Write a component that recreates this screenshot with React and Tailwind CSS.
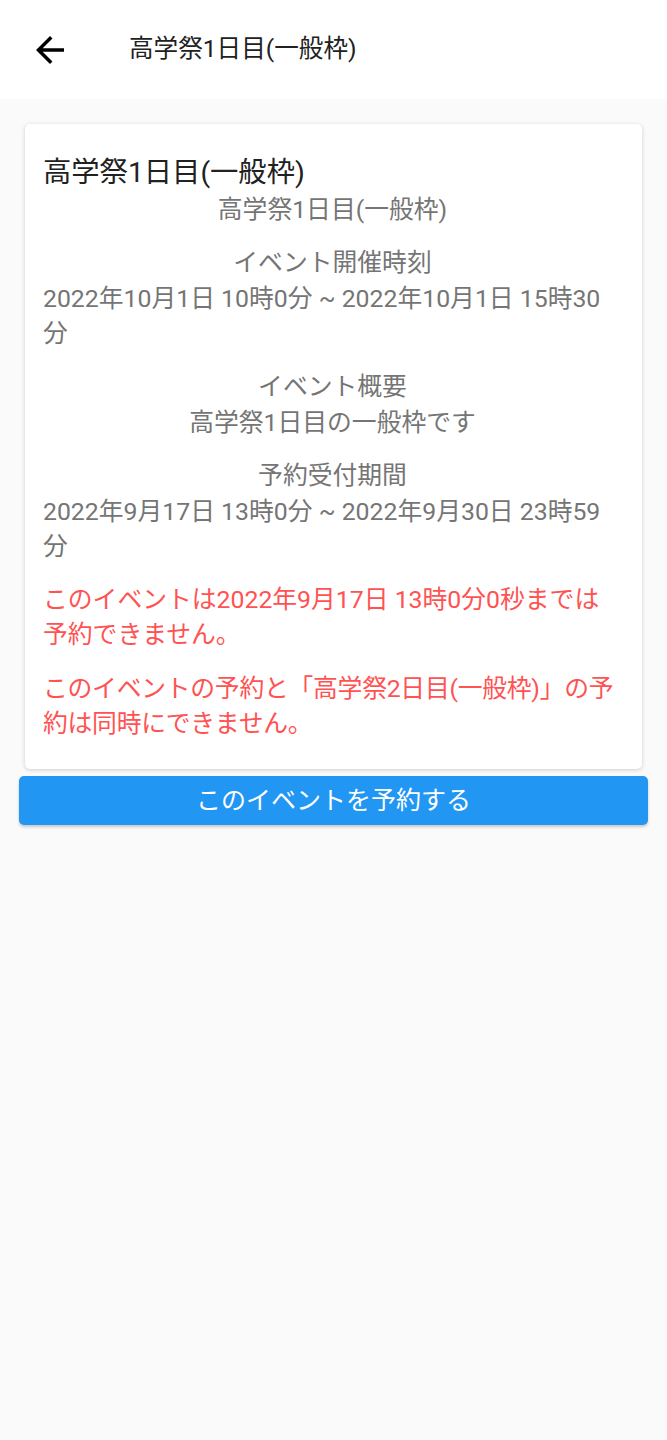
import React from "react";

const font = { fontFamily: "Roboto, 'Noto Sans CJK JP', sans-serif" };

const BackIcon = () => (
  <svg viewBox="0 0 24 24" className="w-[42px] h-[42px]" fill="#000">
    <path d="M20 11H7.83l5.59-5.59L12 4l-8 8 8 8 1.41-1.41L7.83 13H20v-2z" />
  </svg>
);

const Section = ({ label, children, center }) => (
  <div className="mt-[17px]">
    <p className="text-center leading-[37px]">{label}</p>
    <p className={center ? "text-center" : ""}>{children}</p>
  </div>
);

const App = () => {
  return (
    <div className="min-h-[1440px] w-full bg-[#fafafa]" style={font}>
      <header className="h-[99px] bg-white flex items-center">
        <div className="w-[100px] flex items-center pl-[29px]">
          <BackIcon />
        </div>
        <h1 className="ml-[29px] text-[24.6px] text-[#212121]">高学祭1日目(一般枠)</h1>
      </header>

      <main className="px-[19px] pt-[25px]">
        <div className="mx-[6px] bg-white rounded-[5px] shadow-[0_1px_4px_rgba(0,0,0,0.18)] pl-[18px] pr-[20px] pt-[30px] pb-[28px] text-[24.8px] leading-[35px] text-[#757575]">
          <h2 className="text-[28.3px] leading-[38px] text-[#212121]">高学祭1日目(一般枠)</h2>
          <p className="text-center">高学祭1日目(一般枠)</p>

          <Section label="イベント開催時刻">
            2022年10月1日 10時0分 ~ 2022年10月1日 15時30分
          </Section>
          <Section label="イベント概要" center>
            高学祭1日目の一般枠です
          </Section>
          <Section label="予約受付期間">
            2022年9月17日 13時0分 ~ 2022年9月30日 23時59分
          </Section>

          <p className="mt-[18px] text-[#ff5252]">
            このイベントは2022年9月17日 13時0分0秒までは予約できません。
          </p>
          <p className="mt-[19px] text-[#ff5252] tracking-[-0.01em]">
            このイベントの予約と「高学祭2日目(一般枠)」の予約は同時にできません。
          </p>
        </div>

        <button className="mt-[7px] w-full h-[49px] rounded-[5px] bg-[#2196f3] text-white text-[25px] shadow-[0_2px_3px_rgba(0,0,0,0.2)]">
          このイベントを予約する
        </button>
      </main>
    </div>
  );
};

export default App;
